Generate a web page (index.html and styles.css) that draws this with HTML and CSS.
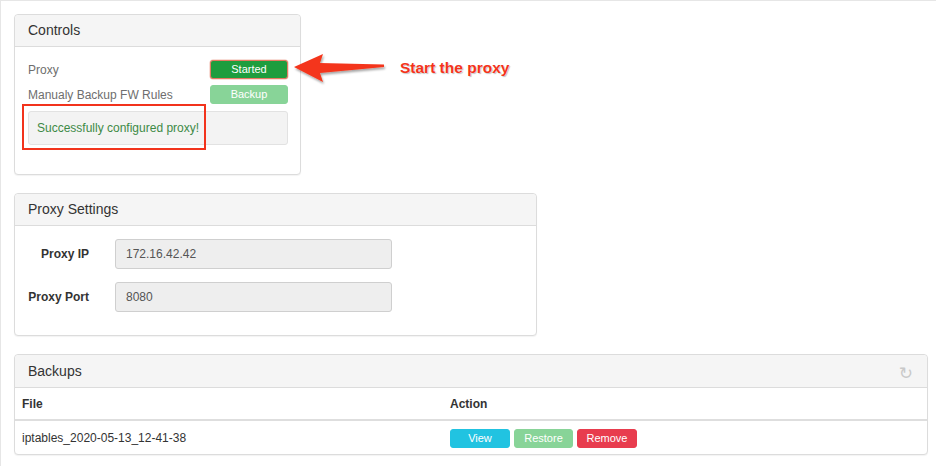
FILE: index.html
```html
<!DOCTYPE html>
<html>
<head>
<meta charset="utf-8">
<link rel="stylesheet" href="styles.css">
</head>
<body>
<div class="page">
  <div class="panel controls">
    <div class="panel-heading">Controls</div>
    <div class="panel-body">
      <div class="ctl-row">
        <span class="ctl-label">Proxy</span>
        <button class="btn btn-started">Started</button>
      </div>
      <div class="ctl-row">
        <span class="ctl-label">Manualy Backup FW Rules</span>
        <button class="btn btn-light-green">Backup</button>
      </div>
      <div class="alert">Successfully configured proxy!</div>
    </div>
    <div class="annot-box"></div>
    <svg class="annot-arrow" width="100" height="40" viewBox="0 0 100 40">
      <defs>
        <filter id="sh" x="-20%" y="-30%" width="140%" height="170%">
          <feDropShadow dx="1" dy="2" stdDeviation="1.2" flood-color="#000" flood-opacity="0.35"/>
        </filter>
      </defs>
      <path d="M2 14 L31 1 L28 10 L92 11.5 L92 14 L28 20 L31 29 Z" fill="#f4361c" filter="url(#sh)"/>
    </svg>
    <div class="annot-text">Start the proxy</div>
  </div>

  <div class="panel settings">
    <div class="panel-heading">Proxy Settings</div>
    <div class="panel-body settings-body">
      <div class="form-row">
        <label class="form-label">Proxy IP</label>
        <div class="form-input">172.16.42.42</div>
      </div>
      <div class="form-row">
        <label class="form-label">Proxy Port</label>
        <div class="form-input">8080</div>
      </div>
    </div>
  </div>

  <div class="panel backups">
    <div class="panel-heading heading-flex">
      <span>Backups</span>
      <span class="refresh">&#8635;</span>
    </div>
    <table class="table">
      <thead>
        <tr><th class="col-file">File</th><th>Action</th></tr>
      </thead>
      <tbody>
        <tr>
          <td>iptables_2020-05-13_12-41-38</td>
          <td>
            <div class="actions">
              <button class="btn btn-info">View</button>
              <button class="btn btn-light-green">Restore</button>
              <button class="btn btn-danger">Remove</button>
            </div>
          </td>
        </tr>
      </tbody>
    </table>
  </div>
</div>
</body>
</html>
```

FILE: styles.css
```css
html, body {
  margin: 0;
  padding: 0;
  background: #fff;
}
body {
  font-family: "Liberation Sans", Arial, sans-serif;
  font-size: 12px;
  color: #333;
  width: 936px;
  height: 466px;
  overflow: hidden;
}
.page {
  border-top: 1px solid #e6e6e6;
  border-left: 1px solid #e6e6e6;
  padding: 13px 0 0 13px;
  height: 466px;
  box-sizing: border-box;
}
.panel {
  position: relative;
  background: #fff;
  border: 1px solid #dcdcdc;
  border-radius: 4px;
  box-shadow: 0 1px 1px rgba(0,0,0,0.05);
  box-sizing: border-box;
  margin-bottom: 18px;
}
.panel-heading {
  background: #f5f5f5;
  border-bottom: 1px solid #dcdcdc;
  border-radius: 4px 4px 0 0;
  height: 32px;
  box-sizing: border-box;
  padding: 0 13px;
  font-size: 14px;
  line-height: 31px;
  color: #333;
}
.controls {
  width: 287px;
  height: 161px;
}
.controls .panel-body {
  padding: 13px 12px 0 13px;
}
.ctl-row {
  display: flex;
  align-items: center;
  justify-content: space-between;
  height: 19px;
  margin-bottom: 6px;
}
.ctl-label {
  color: #6e6e6e;
  font-size: 12px;
}
.btn {
  font-family: "Liberation Sans", Arial, sans-serif;
  font-size: 11px;
  color: #fff;
  border: 1px solid transparent;
  border-radius: 3px;
  height: 19px;
  padding: 0;
  line-height: 17px;
  box-sizing: border-box;
}
.ctl-row .btn {
  width: 78px;
}
.btn-started {
  background: #1e9d3e;
  border-color: #e47a62;
  box-shadow: 0 0 0 0.5px rgba(228,122,98,0.5);
}
.btn-light-green {
  background: #88d498;
  border-color: #88d498;
}
.btn-info {
  background: #21c3e1;
  border-color: #21c3e1;
  width: 60px;
}
.btn-danger {
  background: #e83c4e;
  border-color: #e83c4e;
  width: 60px;
}
.actions .btn-light-green {
  width: 59px;
}
.alert {
  margin-top: 7px;
  height: 34px;
  box-sizing: border-box;
  background: #f3f3f3;
  border: 1px solid #e2e2e2;
  border-radius: 3px;
  padding: 0 8px;
  line-height: 32px;
  color: #3d8a46;
  font-size: 12px;
}
.annot-box {
  position: absolute;
  left: 7px;
  top: 89px;
  width: 184px;
  height: 46px;
  border: 2px solid #f2331c;
  box-sizing: border-box;
}
.annot-arrow {
  position: absolute;
  left: 277px;
  top: 38px;
}
.annot-text {
  position: absolute;
  left: 385px;
  top: 44px;
  white-space: nowrap;
  font-weight: bold;
  font-size: 15.5px;
  color: #f4331a;
  text-shadow: 0 0 1px #fff, 1px 1px 1px rgba(0,0,0,0.25);
}
.settings {
  width: 523px;
  height: 143px;
}
.settings-body {
  padding: 13px 0 0 0;
}
.form-row {
  display: flex;
  align-items: center;
  margin-bottom: 13px;
}
.form-label {
  width: 74px;
  text-align: right;
  font-weight: bold;
  font-size: 12px;
  color: #333;
  margin-right: 26px;
}
.form-input {
  width: 277px;
  height: 30px;
  box-sizing: border-box;
  background: #eeeeee;
  border: 1px solid #cfcfcf;
  border-radius: 3px;
  padding: 0 10px;
  line-height: 28px;
  color: #555;
  font-size: 12px;
}
.backups {
  width: 914px;
  height: 101px;
  margin-bottom: 0;
}
.heading-flex {
  display: flex;
  justify-content: space-between;
  align-items: center;
  height: 33px;
}
.refresh {
  font-family: "DejaVu Sans", sans-serif;
  font-size: 17px;
  color: #c9c9c9;
  line-height: 20px;
  margin-right: 1px;
  margin-top: 3px;
}
.table {
  width: 100%;
  border-collapse: collapse;
}
.table th {
  text-align: left;
  font-weight: bold;
  font-size: 12px;
  color: #333;
  height: 32px;
  padding: 0 7px;
  box-sizing: border-box;
  border-bottom: 2px solid #dedede;
}
.table th.col-file {
  width: 428px;
}
.table td {
  height: 34px;
  padding: 0 7px;
  font-size: 12px;
  color: #333;
  vertical-align: middle;
}
.actions {
  display: flex;
  gap: 4px;
}
```
